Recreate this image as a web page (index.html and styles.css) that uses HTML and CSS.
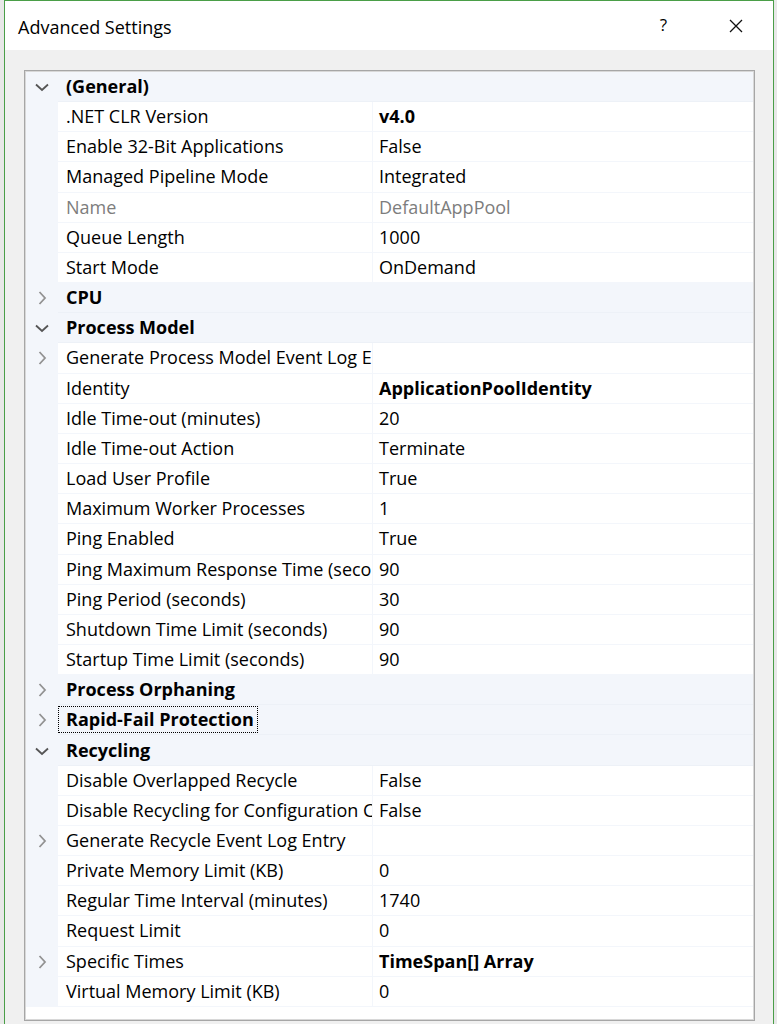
FILE: index.html
```html
<!DOCTYPE html>
<html lang="en">
<head>
<meta charset="utf-8">
<title>Advanced Settings</title>
<link rel="stylesheet" href="styles.css">
</head>
<body>
<div class="window">
  <div class="titlebar">
    <div class="title">Advanced Settings</div>
    <div class="tb-buttons">
      <span class="help">?</span>
      <svg class="close" width="14" height="14" viewBox="0 0 14 14"><path d="M1 1 L13 13 M13 1 L1 13" stroke="#111" stroke-width="1.3" fill="none"/></svg>
    </div>
  </div>
  <div class="client">
    <div class="grid">
      <div class="cat"><span class="tg"><svg width="14" height="14" viewBox="0 0 14 14"><path d="M1 4.5 L7 10 L13 4.5" class="dn"/></svg></span><span class="cname">(General)</span></div>
      <div class="row"><span class="tg"></span><span class="name">.NET CLR Version</span><span class="val b">v4.0</span></div>
      <div class="row"><span class="tg"></span><span class="name">Enable 32-Bit Applications</span><span class="val">False</span></div>
      <div class="row"><span class="tg"></span><span class="name">Managed Pipeline Mode</span><span class="val">Integrated</span></div>
      <div class="row ro"><span class="tg"></span><span class="name">Name</span><span class="val">DefaultAppPool</span></div>
      <div class="row"><span class="tg"></span><span class="name">Queue Length</span><span class="val">1000</span></div>
      <div class="row"><span class="tg"></span><span class="name">Start Mode</span><span class="val">OnDemand</span></div>
      <div class="cat"><span class="tg"><svg width="14" height="14" viewBox="0 0 14 14"><path d="M4.5 1 L10 7 L4.5 13" class="rt"/></svg></span><span class="cname">CPU</span></div>
      <div class="cat"><span class="tg"><svg width="14" height="14" viewBox="0 0 14 14"><path d="M1 4.5 L7 10 L13 4.5" class="dn"/></svg></span><span class="cname">Process Model</span></div>
      <div class="row"><span class="tg"><svg width="14" height="14" viewBox="0 0 14 14"><path d="M4.5 1 L10 7 L4.5 13" class="rt"/></svg></span><span class="name">Generate Process Model Event Log Entry</span><span class="val"></span></div>
      <div class="row"><span class="tg"></span><span class="name">Identity</span><span class="val b">ApplicationPoolIdentity</span></div>
      <div class="row"><span class="tg"></span><span class="name">Idle Time-out (minutes)</span><span class="val">20</span></div>
      <div class="row"><span class="tg"></span><span class="name">Idle Time-out Action</span><span class="val">Terminate</span></div>
      <div class="row"><span class="tg"></span><span class="name">Load User Profile</span><span class="val">True</span></div>
      <div class="row"><span class="tg"></span><span class="name">Maximum Worker Processes</span><span class="val">1</span></div>
      <div class="row"><span class="tg"></span><span class="name">Ping Enabled</span><span class="val">True</span></div>
      <div class="row"><span class="tg"></span><span class="name">Ping Maximum Response Time (seconds)</span><span class="val">90</span></div>
      <div class="row"><span class="tg"></span><span class="name">Ping Period (seconds)</span><span class="val">30</span></div>
      <div class="row"><span class="tg"></span><span class="name">Shutdown Time Limit (seconds)</span><span class="val">90</span></div>
      <div class="row"><span class="tg"></span><span class="name">Startup Time Limit (seconds)</span><span class="val">90</span></div>
      <div class="cat"><span class="tg"><svg width="14" height="14" viewBox="0 0 14 14"><path d="M4.5 1 L10 7 L4.5 13" class="rt"/></svg></span><span class="cname">Process Orphaning</span></div>
      <div class="cat"><span class="tg"><svg width="14" height="14" viewBox="0 0 14 14"><path d="M4.5 1 L10 7 L4.5 13" class="rt"/></svg></span><span class="cname focus">Rapid-Fail Protection</span></div>
      <div class="cat"><span class="tg"><svg width="14" height="14" viewBox="0 0 14 14"><path d="M1 4.5 L7 10 L13 4.5" class="dn"/></svg></span><span class="cname">Recycling</span></div>
      <div class="row"><span class="tg"></span><span class="name">Disable Overlapped Recycle</span><span class="val">False</span></div>
      <div class="row"><span class="tg"></span><span class="name">Disable Recycling for Configuration Changes</span><span class="val">False</span></div>
      <div class="row"><span class="tg"><svg width="14" height="14" viewBox="0 0 14 14"><path d="M4.5 1 L10 7 L4.5 13" class="rt"/></svg></span><span class="name">Generate Recycle Event Log Entry</span><span class="val"></span></div>
      <div class="row"><span class="tg"></span><span class="name">Private Memory Limit (KB)</span><span class="val">0</span></div>
      <div class="row"><span class="tg"></span><span class="name">Regular Time Interval (minutes)</span><span class="val">1740</span></div>
      <div class="row"><span class="tg"></span><span class="name">Request Limit</span><span class="val">0</span></div>
      <div class="row"><span class="tg"><svg width="14" height="14" viewBox="0 0 14 14"><path d="M4.5 1 L10 7 L4.5 13" class="rt"/></svg></span><span class="name">Specific Times</span><span class="val b">TimeSpan[] Array</span></div>
      <div class="row"><span class="tg"></span><span class="name">Virtual Memory Limit (KB)</span><span class="val">0</span></div>
    </div>
  </div>
</div>
</body>
</html>
```

FILE: styles.css
```css
html, body {
  margin: 0;
  padding: 0;
  height: 100%;
  overflow: hidden;
}
body {
  background: #e8e8e8;
  font-family: "Open Sans", "Noto Sans", sans-serif;
  color: #000;
}
.window {
  margin-left: 4px;
  width: 768px;
  height: 1024px;
  border: 1px solid #4a9e48;
  border-bottom: none;
  background: #f0f0f0;
  box-sizing: content-box;
}
.titlebar {
  height: 49px;
  background: #fff;
  display: flex;
  align-items: center;
  justify-content: space-between;
}
.title {
  padding-left: 13px;
  font-size: 18px;
  padding-top: 2px;
}
.tb-buttons {
  display: flex;
  align-items: center;
  gap: 62px;
  padding-right: 30px;
}
.help {
  font-size: 17px;
  padding-bottom: 2px;
}
.close {
  display: block;
}
.client {
  padding: 20px 18px 0 19px;
}
.grid {
  height: 947px;
  border: 1px solid #a6a6a6;
  box-shadow: inset 0 0 0 1px #d8d8d8;
  background: #fff;
  padding: 1px;
  box-sizing: content-box;
  font-size: 18px;
}
.cat, .row {
  display: flex;
  height: 30.17px;
  box-sizing: border-box;
  align-items: center;
  line-height: 29px;
  white-space: nowrap;
}
.cat {
  background: #f3f6fb;
  border-bottom: 1px solid #edf1f7;
}
.row {
  border-bottom: 1px solid #f3f6fb;
  background: #fff;
}
.tg {
  width: 32px;
  flex: none;
  align-self: stretch;
  background: #f3f6fb;
  display: flex;
  align-items: center;
  justify-content: center;
  margin-bottom: -1px;
}
.tg svg {
  display: block;
}
.dn {
  fill: none;
  stroke: #555;
  stroke-width: 1.8;
}
.rt {
  fill: none;
  stroke: #929292;
  stroke-width: 1.8;
}
.cname {
  font-weight: 700;
  padding-left: 8px;
}
.cname.focus {
  outline: 1px dotted #000;
  outline-offset: -1px;
  padding-right: 4px;
  line-height: 27px;
}
.name {
  width: 315px;
  flex: none;
  box-sizing: border-box;
  padding-left: 8px;
  overflow: hidden;
  text-overflow: clip;
  align-self: stretch;
  border-right: 1px solid #f3f6fb;
}
.val {
  padding-left: 6px;
  flex: 1;
  align-self: stretch;
}
.b {
  font-weight: 700;
}
.ro .name, .ro .val {
  color: #7d7d7d;
}
```
